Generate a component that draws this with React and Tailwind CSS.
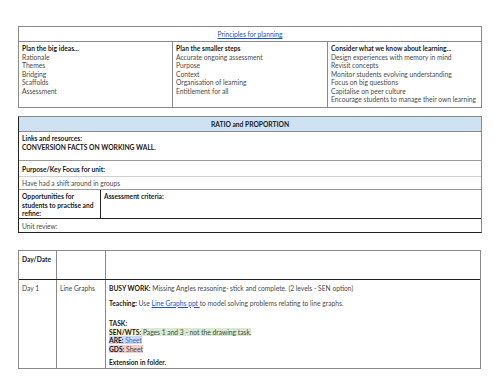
export default function App() {
  const font = { fontFamily: "Lato, 'Noto Sans', sans-serif" };
  return (
    <div className="w-[500px] h-[386px] bg-white text-[6.7px] leading-[8.5px] text-[#4a4a4a]" style={font}>
      <div className="h-[26px]" />
      {/* Table 1 */}
      <div className="mx-[18px] w-[464px] border border-[#8a8a8a]">
        <div className="h-[15px] flex items-center justify-center border-b border-[#8a8a8a]">
          <span className="text-[#1155cc] underline">Principles for planning</span>
        </div>
        <div className="grid grid-cols-[154px_155px_1fr] h-[65px]">
          <div className="border-r border-[#8a8a8a] pl-[3px] pt-[2px]">
            <div className="font-bold text-[#1a1a1a]">Plan the big ideas...</div>
            <div>Rationale</div>
            <div>Themes</div>
            <div>Bridging</div>
            <div>Scaffolds</div>
            <div>Assessment</div>
          </div>
          <div className="border-r border-[#8a8a8a] pl-[3px] pt-[2px]">
            <div className="font-bold text-[#1a1a1a]">Plan the smaller steps</div>
            <div>Accurate ongoing assessment</div>
            <div>Purpose</div>
            <div>Context</div>
            <div>Organisation of learning</div>
            <div>Entitlement for all</div>
          </div>
          <div className="pl-[3px] pt-[2px]">
            <div className="font-bold text-[#1a1a1a]">Consider what we know about learning...</div>
            <div>Design experiences with memory in mind</div>
            <div>Revisit concepts</div>
            <div>Monitor students evolving understanding</div>
            <div>Focus on big questions</div>
            <div>Capitalise on peer culture</div>
            <div>Encourage students to manage their own learning</div>
          </div>
        </div>
      </div>
      <div className="h-[8px]" />
      {/* Table 2 */}
      <div className="mx-[18px] w-[464px] border border-[#8a8a8a] border-l-[#222] border-b-[#222]">
        <div className="h-[15px] bg-[#cfe2f3] flex items-center justify-center border-b border-[#8a8a8a] font-bold text-[#1a1a1a]">
          RATIO and PROPORTION
        </div>
        <div className="h-[29px] border-b border-[#9a9a9a] pl-[3px] pt-[2px] font-bold text-[#1a1a1a]">
          <div>Links and resources:</div>
          <div>CONVERSION FACTS ON WORKING WALL.</div>
        </div>
        <div className="h-[16px] border-b border-[#d0d0d0] pl-[3px] pt-[4px] font-bold text-[#1a1a1a]">
          Purpose/Key Focus for unit:
        </div>
        <div className="h-[13px] border-b border-[#9a9a9a] pl-[3px] pt-[2px]">Have had a shift around in groups</div>
        <div className="h-[29px] grid grid-cols-[82px_1fr] border-b border-[#222]">
          <div className="border-r border-[#222] pl-[3px] pt-[2px] font-bold text-[#1a1a1a]">
            <div>Opportunities for</div>
            <div>students to practise and</div>
            <div>refine:</div>
          </div>
          <div className="pl-[3px] pt-[2px] font-bold text-[#1a1a1a]">Assessment criteria:</div>
        </div>
        <div className="h-[13px] pl-[3px] pt-[3px]">Unit review:</div>
      </div>
      <div className="h-[17px]" />
      {/* Table 3 */}
      <div className="mx-[18px] w-[463px] border border-[#8a8a8a]">
        <div className="grid grid-cols-[38px_49px_1fr] h-[29px] border-b border-[#222]">
          <div className="border-r border-[#8a8a8a] pl-[3px] pt-[4px] font-bold text-[#1a1a1a]">Day/Date</div>
          <div className="border-r border-[#8a8a8a]" />
          <div />
        </div>
        <div className="grid grid-cols-[38px_49px_1fr] h-[88px]">
          <div className="border-r border-[#8a8a8a] pl-[3px] pt-[4px]">Day 1</div>
          <div className="border-r border-[#8a8a8a] pl-[3px] pt-[4px]">Line Graphs</div>
          <div className="pl-[3px] pt-[4px]">
            <div>
              <span className="font-bold text-[#1a1a1a]">BUSY WORK:</span> Missing Angles reasoning- stick and complete. (2 levels - SEN option)
            </div>
            <div className="mt-[6px]">
              <span className="font-bold text-[#1a1a1a]">Teaching:</span> Use{" "}
              <span className="text-[#1155cc] underline">Line Graphs ppt </span>to model solving problems relating to line graphs.
            </div>
            <div className="mt-[12px] font-bold text-[#1a1a1a]">TASK:</div>
            <div>
              <span className="font-bold text-[#1a1a1a] bg-[#fff2cc]">SEN/WTS:</span>
              <span className="bg-[#d9ead3]"> Pages 1 and 3 - not the drawing task.</span>
            </div>
            <div>
              <span className="bg-[#c9daf8]"><span className="font-bold text-[#1a1a1a]">ARE:</span> <span className="text-[#4a6fb5]">Sheet</span></span>
            </div>
            <div>
              <span className="bg-[#f4cccc]"><span className="font-bold text-[#1a1a1a]">GDS:</span> Sheet</span>
            </div>
            <div className="mt-[5px] font-bold text-[#1a1a1a]">Extension in folder.</div>
          </div>
        </div>
      </div>
    </div>
  );
}
